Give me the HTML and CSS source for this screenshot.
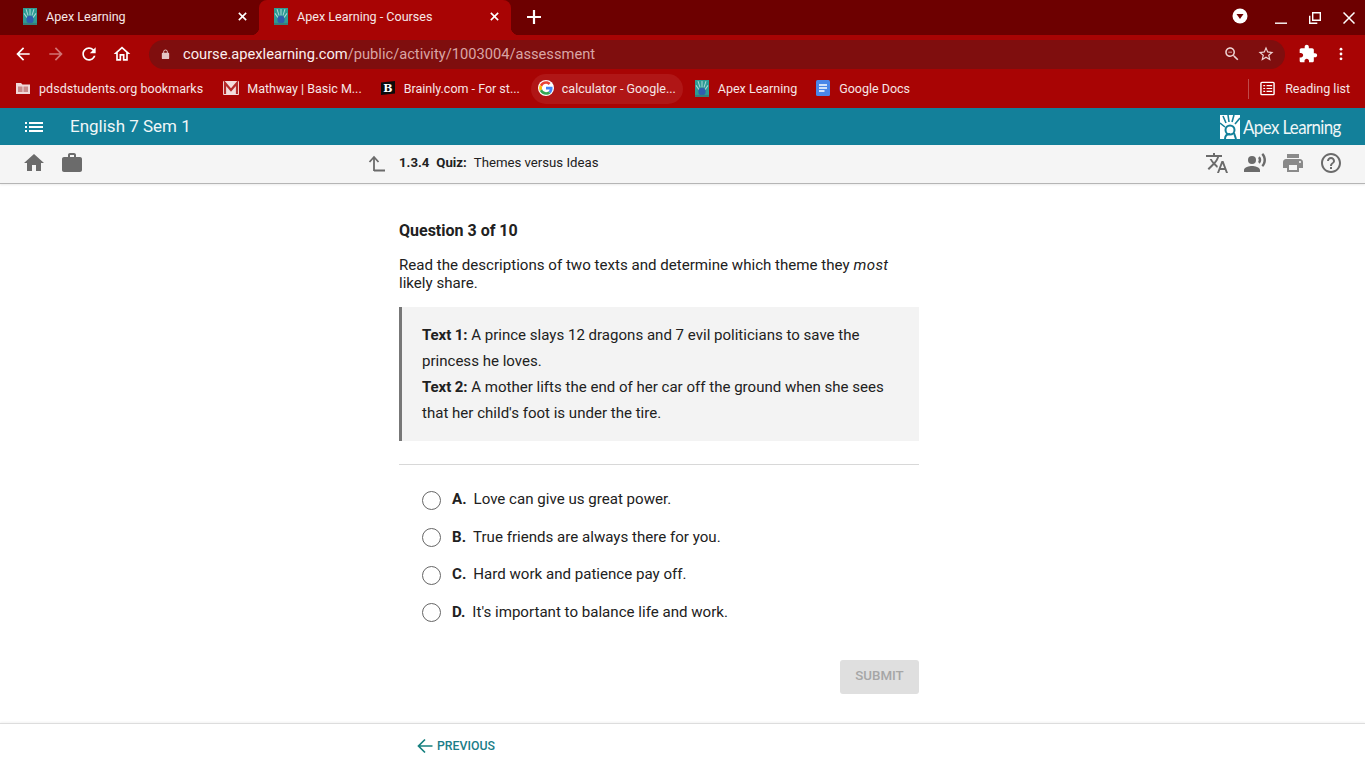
FILE: index.html
```html
<!DOCTYPE html>
<html lang="en">
<head>
<meta charset="utf-8">
<title>Apex Learning - Courses</title>
<link rel="stylesheet" href="styles.css">
</head>
<body>
<svg class="sprite" xmlns="http://www.w3.org/2000/svg">
  <symbol id="fav" viewBox="1 0 14 16" preserveAspectRatio="none"><rect x="1" y="0" width="14" height="16" fill="#2e9c94"/><path d="M4 1l2 6M8 1v6M12 1l-2 6M2 5l3 4M14 5l-3 4" stroke="#a9d6d8" stroke-width="1" fill="none"/><circle cx="8" cy="11" r="3.6" fill="#2f5fb0"/><rect x="1" y="14" width="14" height="2" fill="#35807c"/></symbol>
  <symbol id="close" viewBox="0 0 12 12"><path d="M2 2l8 8M10 2l-8 8" stroke="currentColor" stroke-width="1.7" fill="none"/></symbol>
  <symbol id="back" viewBox="0 0 24 24"><path d="M20 11H7.83l5.59-5.59L12 4l-8 8 8 8 1.41-1.41L7.83 13H20v-2z"/></symbol>
  <symbol id="fwd" viewBox="0 0 24 24"><path d="M4 11h12.17l-5.59-5.59L12 4l8 8-8 8-1.41-1.41L16.17 13H4v-2z"/></symbol>
  <symbol id="refresh" viewBox="0 0 24 24"><path d="M17.65 6.35C16.2 4.9 14.21 4 12 4c-4.42 0-7.99 3.58-7.99 8s3.57 8 7.99 8c3.73 0 6.84-2.55 7.73-6h-2.08c-.82 2.33-3.04 4-5.65 4-3.31 0-6-2.69-6-6s2.69-6 6-6c1.66 0 3.14.69 4.22 1.78L13 11h7V4l-2.35 2.35z"/></symbol>
  <symbol id="homeo" viewBox="0 0 24 24"><path d="M12 5.69l5 4.5V18h-2v-6H9v6H7v-7.81l5-4.5M12 3L2 12h3v8h6v-6h2v6h6v-8h3L12 3z"/></symbol>
  <symbol id="lock" viewBox="0 0 24 24"><path d="M18 8h-1V6c0-2.76-2.24-5-5-5S7 3.24 7 6v2H6c-1.1 0-2 .9-2 2v10c0 1.1.9 2 2 2h12c1.1 0 2-.9 2-2V10c0-1.1-.9-2-2-2zM9 6c0-1.66 1.34-3 3-3s3 1.34 3 3v2H9V6z"/></symbol>
  <symbol id="zoomout" viewBox="0 0 24 24"><path d="M15.5 14h-.79l-.28-.27C15.41 12.59 16 11.11 16 9.5 16 5.91 13.09 3 9.5 3S3 5.91 3 9.5 5.91 16 9.5 16c1.61 0 3.09-.59 4.23-1.57l.27.28v.79l5 4.99L20.49 19l-4.99-5zm-6 0C7.01 14 5 11.99 5 9.5S7.01 5 9.5 5 14 7.01 14 9.5 11.99 14 9.5 14zM7 9h5v1H7z"/></symbol>
  <symbol id="star" viewBox="0 0 24 24"><path d="M22 9.24l-7.19-.62L12 2 9.19 8.63 2 9.24l5.46 4.73L5.82 21 12 17.27 18.18 21l-1.63-7.03L22 9.24zM12 15.4l-3.76 2.27 1-4.28-3.32-2.88 4.38-.38L12 6.1l1.71 4.04 4.38.38-3.32 2.88 1 4.28L12 15.4z"/></symbol>
  <symbol id="ext" viewBox="0 0 24 24"><path d="M20.5 11H19V7c0-1.1-.9-2-2-2h-4V3.5C13 2.12 11.88 1 10.5 1S8 2.12 8 3.5V5H4c-1.1 0-1.99.9-1.99 2v3.8H3.5c1.49 0 2.7 1.21 2.7 2.7s-1.21 2.7-2.7 2.7H2V20c0 1.1.9 2 2 2h3.8v-1.5c0-1.49 1.21-2.7 2.7-2.7 1.49 0 2.7 1.21 2.7 2.7V22H17c1.1 0 2-.9 2-2v-4h1.5c1.38 0 2.5-1.12 2.5-2.5S21.88 11 20.5 11z"/></symbol>
  <symbol id="home" viewBox="0 0 24 24"><path d="M10 20v-6h4v6h5v-8h3L12 3 2 12h3v8z"/></symbol>
  <symbol id="work" viewBox="0 0 24 24"><path d="M20 6h-4V4c0-1.11-.89-2-2-2h-4c-1.11 0-2 .89-2 2v2H4c-1.11 0-1.99.89-1.99 2L2 19c0 1.11.89 2 2 2h16c1.11 0 2-.89 2-2V8c0-1.11-.89-2-2-2zm-6 0h-4V4h4v2z"/></symbol>
  <symbol id="translate" viewBox="0 0 24 24"><path d="M12.87 15.07l-2.54-2.51.03-.03c1.74-1.94 2.98-4.17 3.71-6.53H17V4h-7V2H8v2H1v1.99h11.17C11.5 7.92 10.44 9.75 9 11.35 8.07 10.32 7.3 9.19 6.69 8h-2c.73 1.63 1.73 3.17 2.98 4.56l-5.09 5.02L4 19l5-5 3.11 3.11.76-2.04zM18.5 10h-2L12 22h2l1.12-3h4.75L21 22h2l-4.5-12zm-2.62 7l1.62-4.33L19.12 17h-3.24z"/></symbol>
  <symbol id="voice" viewBox="0 0 24 24"><circle cx="9" cy="9" r="4"/><path d="M9 15c-2.67 0-8 1.34-8 4v2h16v-2c0-2.66-5.33-4-8-4zm7.76-9.64l-1.68 1.69c.84 1.18.84 2.71 0 3.89l1.68 1.69c2.02-2.02 2.02-5.07 0-7.27zM20.07 2l-1.63 1.63c2.77 3.02 2.77 7.56 0 10.74L20.07 16c3.9-3.89 3.91-9.95 0-14z"/></symbol>
  <symbol id="print" viewBox="0 0 24 24"><path d="M19 8H5c-1.66 0-3 1.34-3 3v6h4v4h12v-4h4v-6c0-1.66-1.34-3-3-3zm-3 11H8v-5h8v5zm3-7c-.55 0-1-.45-1-1s.45-1 1-1 1 .45 1 1-.45 1-1 1zm-1-9H6v4h12V3z"/></symbol>
  <symbol id="help" viewBox="0 0 24 24"><path d="M11 18h2v-2h-2v2zm1-16C6.48 2 2 6.48 2 12s4.48 10 10 10 10-4.48 10-10S17.52 2 12 2zm0 18c-4.41 0-8-3.59-8-8s3.59-8 8-8 8 3.59 8 8-3.59 8-8 8zm0-14c-2.21 0-4 1.79-4 4h2c0-1.1.9-2 2-2s2 .9 2 2c0 2-3 1.75-3 5h2c0-2.25 3-2.5 3-5 0-2.21-1.79-4-4-4z"/></symbol>
  <symbol id="list" viewBox="0 0 24 24"><path d="M3 13h2v-2H3v2zm0 4h2v-2H3v2zm0-8h2V7H3v2zm4 4h14v-2H7v2zm0 4h14v-2H7v2zM7 7v2h14V7H7z"/></symbol>
  <symbol id="upto" viewBox="0 0 18 18"><path d="M7 17V3.500M2.500 8L7 3l4.500 5M7 16.500h11" fill="none" stroke="currentColor" stroke-width="1.800"/></symbol>
</svg>

<header class="chrome">
  <div class="tabstrip">
    <div class="tab">
      <svg class="fav"><use href="#fav"/></svg>
      <span class="tab-title">Apex Learning</span>
      <svg class="tab-x"><use href="#close"/></svg>
    </div>
    <div class="tab tab-active">
      <svg class="fav"><use href="#fav"/></svg>
      <span class="tab-title">Apex Learning - Courses</span>
      <svg class="tab-x"><use href="#close"/></svg>
    </div>
    <svg class="newtab" viewBox="0 0 14 14"><path d="M7 0v14M0 7h14" stroke="#fff" stroke-width="2.200"/></svg>
    <div class="winbtns">
      <svg class="dropdown" viewBox="0 0 16 16"><circle cx="8" cy="8" r="7.500" fill="#fff"/><path d="M4.500 6h7L8 11z" fill="#6d0000"/></svg>
      <svg class="win win-min" viewBox="0 0 12 12"><path d="M0 11.200h12" stroke="#fff" stroke-width="1.400"/></svg>
      <svg class="win win-max" viewBox="0 0 12 12"><path d="M3.700.7h7.600v7.600H3.700zM.7 3.700v7.600h7.600" fill="none" stroke="#fff" stroke-width="1.400"/></svg>
      <svg class="win win-close" viewBox="0 0 12 12"><path d="M.5.500l11 11M11.500.5l-11 11" stroke="#fff" stroke-width="1.500"/></svg>
    </div>
  </div>

  <div class="toolbar">
    <svg class="ti"><use href="#back"/></svg>
    <svg class="ti ti-dim"><use href="#fwd"/></svg>
    <svg class="ti"><use href="#refresh"/></svg>
    <svg class="ti"><use href="#homeo"/></svg>
    <div class="omnibox">
      <svg class="lock"><use href="#lock"/></svg>
      <span class="url"><span class="url-host">course.apexlearning.com</span>/public/activity/1003004/assessment</span>
      <svg class="omni-i omni-zoom"><use href="#zoomout"/></svg>
      <svg class="omni-i omni-star"><use href="#star"/></svg>
    </div>
    <svg class="ti ti-ext"><use href="#ext"/></svg>
    <svg class="kebab" viewBox="0 0 4 16"><circle cx="2" cy="2.500" r="1.600"/><circle cx="2" cy="8" r="1.600"/><circle cx="2" cy="13.500" r="1.600"/></svg>
  </div>

  <nav class="bookmarks">
    <a class="bm">
      <svg class="bm-i" viewBox="0 0 16 16"><path d="M1 3h5l1.500 1.500H15V14H1z" fill="#f0d8d8"/><rect x="3" y="6.500" width="4.500" height="5.500" fill="#c98a8a"/><rect x="8.500" y="6.500" width="4.500" height="5.500" fill="#c98a8a"/></svg>
      <span>pdsdstudents.org bookmarks</span>
    </a>
    <a class="bm">
      <svg class="bm-i" viewBox="0 0 16 16"><rect x="0" y="1" width="16" height="14" rx="1" fill="#f3dcdc"/><path d="M2 14V3l6 7 6-7v11" fill="none" stroke="#b52a2a" stroke-width="2.200"/></svg>
      <span>Mathway | Basic M...</span>
    </a>
    <a class="bm">
      <svg class="bm-i" viewBox="0 0 16 16"><path d="M1 2.500L15 1v12.500L1 15z" fill="#0b0b0b"/><text x="8" y="11.800" class="bm-b">B</text></svg>
      <span>Brainly.com - For st...</span>
    </a>
    <a class="bm bm-hover">
      <svg class="bm-i" viewBox="-4 -4 56 56"><circle cx="24" cy="24" r="28" fill="#fff"/><path fill="#EA4335" d="M24 9.500c3.540 0 6.710 1.220 9.210 3.600l6.850-6.850C35.900 2.380 30.470 0 24 0 14.620 0 6.510 5.380 2.560 13.220l7.980 6.190C12.430 13.720 17.740 9.500 24 9.500z"/><path fill="#4285F4" d="M46.980 24.550c0-1.570-.15-3.090-.38-4.550H24v9.020h12.940c-.58 2.960-2.260 5.480-4.780 7.180l7.730 6c4.510-4.180 7.090-10.360 7.090-17.650z"/><path fill="#FBBC05" d="M10.530 28.590c-.48-1.450-.76-2.990-.76-4.590s.27-3.140.76-4.590l-7.980-6.190C.92 16.460 0 20.120 0 24c0 3.880.92 7.540 2.560 10.780l7.970-6.190z"/><path fill="#34A853" d="M24 48c6.480 0 11.930-2.130 15.890-5.810l-7.730-6c-2.150 1.450-4.920 2.300-8.160 2.300-6.260 0-11.570-4.220-13.470-9.910l-7.980 6.190C6.510 42.620 14.620 48 24 48z"/></svg>
      <span>calculator - Google...</span>
    </a>
    <a class="bm">
      <svg class="bm-i bm-fav"><use href="#fav"/></svg>
      <span>Apex Learning</span>
    </a>
    <a class="bm">
      <svg class="bm-i" viewBox="0 0 16 16"><rect x="1" y="0" width="14" height="16" rx="1.500" fill="#4a86e8"/><path d="M4 5h8M4 8h8M4 11h5.500" stroke="#fff" stroke-width="1.300"/></svg>
      <span>Google Docs</span>
    </a>
    <div class="reading">
      <svg class="reading-i" viewBox="0 0 16 16"><rect x="1" y="1.500" width="14" height="13" rx="1" fill="none" stroke="#fff" stroke-width="1.500"/><path d="M3.500 5h2M7 5h6M3.500 8h2M7 8h6M3.500 11h2M7 11h6" stroke="#fff" stroke-width="1.300"/></svg>
      <span>Reading list</span>
    </div>
  </nav>
</header>

<div class="appbar">
  <svg class="menu"><use href="#list"/></svg>
  <span class="course">English 7 Sem 1</span>
  <div class="logo">
    <svg class="logo-mark" viewBox="0 0 20 24"><rect width="20" height="24" fill="#fff"/><path d="M3 1l3 7M8 0l1 7M14 0l-2 7M20 3l-5 6M0 8l5 4" stroke="#13809a" stroke-width="1.600" fill="none"/><circle cx="10" cy="15" r="4.500" fill="none" stroke="#13809a" stroke-width="2"/><path d="M5 24c0-4 2-5 5-5M14 18l2 6" stroke="#13809a" stroke-width="2" fill="none"/></svg>
    <span class="logo-text">Apex Learning</span>
  </div>
</div>

<div class="subbar">
  <div class="sub-left">
    <svg class="si"><use href="#home"/></svg>
    <svg class="si"><use href="#work"/></svg>
  </div>
  <svg class="up"><use href="#upto"/></svg>
  <div class="crumb"><b>1.3.4</b><b>Quiz:</b><span>Themes versus Ideas</span></div>
  <div class="sub-right">
    <svg class="si"><use href="#translate"/></svg>
    <svg class="si"><use href="#voice"/></svg>
    <svg class="si si-print"><use href="#print"/></svg>
    <svg class="si"><use href="#help"/></svg>
  </div>
</div>

<main class="main">
  <div class="column">
    <h1 class="qnum">Question 3 of 10</h1>
    <p class="prompt">Read the descriptions of two texts and determine which theme they <em>most</em> likely share.</p>
    <blockquote class="passage">
      <p><b>Text 1:</b> A prince slays 12 dragons and 7 evil politicians to save the princess he loves.</p>
      <p><b>Text 2:</b> A mother lifts the end of her car off the ground when she sees that her child's foot is under the tire.</p>
    </blockquote>
    <ul class="answers">
      <li class="answer"><span class="radio"></span><b>A.</b><span>Love can give us great power.</span></li>
      <li class="answer"><span class="radio"></span><b>B.</b><span>True friends are always there for you.</span></li>
      <li class="answer"><span class="radio"></span><b>C.</b><span>Hard work and patience pay off.</span></li>
      <li class="answer"><span class="radio"></span><b>D.</b><span>It's important to balance life and work.</span></li>
    </ul>
    <div class="actions"><button class="submit" disabled>SUBMIT</button></div>
  </div>
</main>

<footer class="footer">
  <a class="prev">
    <svg class="prev-i" viewBox="0 0 16 16"><path d="M15.500 8H1.500M8 1.500L1.500 8 8 14.500" fill="none" stroke="#16807f" stroke-width="1.700"/></svg>
    <span>PREVIOUS</span>
  </a>
</footer>
</body>
</html>
```

FILE: styles.css
```css
* { box-sizing: border-box; }
html, body { margin: 0; height: 100%; }
body {
  height: 768px;
  overflow: hidden;
  display: flex;
  flex-direction: column;
  font-family: Roboto, "Liberation Sans", sans-serif;
  background: #fff;
  color: #212121;
}
.sprite { display: none; }

/* Browser chrome */
.chrome { color: #fff; }
.tabstrip {
  height: 35px;
  background: #6d0000;
  display: flex;
  align-items: center;
  padding-left: 8px;
}
.tab {
  position: relative;
  width: 251px;
  height: 35px;
  display: flex;
  align-items: center;
  padding: 0 10px 2px 15px;
  font-size: 12.550px;
}
.tab-active {
  width: 252px;
  background: #a80404;
  border-radius: 8px 8px 0 0;
}
.tab-active::before,
.tab-active::after {
  content: "";
  position: absolute;
  bottom: 0;
  width: 8px;
  height: 8px;
}
.tab-active::before { left: -8px; background: radial-gradient(circle at 0 0, transparent 8px, #a80404 8.500px); }
.tab-active::after { right: -8px; background: radial-gradient(circle at 100% 0, transparent 8px, #a80404 8.500px); }
.fav { width: 14px; height: 17px; flex: none; }
.tab-title { margin-left: 9px; flex: 1; color: #f6e6e6; white-space: nowrap; }
.tab-x { width: 11px; height: 11px; margin-right: 1px; color: #fff; }
.newtab { width: 14px; height: 14px; margin-left: 16px; margin-bottom: 2px; }
.winbtns { margin-left: auto; display: flex; align-items: center; }
.dropdown { width: 16px; height: 16px; margin-right: 27px; margin-bottom: 4px; }
.win { width: 12px; height: 12px; }
.win-min { margin-right: 22px; margin-top: 1px; }
.win-max { margin-right: 22px; }
.win-close { margin-right: 10px; }

.toolbar {
  height: 35px;
  background: #a80404;
  display: flex;
  align-items: center;
  padding: 3px 0 0 13px;
  fill: #fff;
}
.ti { width: 20px; height: 20px; margin-right: 13px; flex: none; }
.ti-dim { fill: #d27474; }
.omnibox {
  width: 1136px;
  height: 29px;
  margin-left: 4px;
  background: #7f0e0e;
  border-radius: 15px;
  display: flex;
  align-items: center;
  padding-left: 11px;
  flex: none;
}
.lock { width: 11px; height: 11px; fill: #e4c4c4; flex: none; }
.url { margin-left: 12px; font-size: 14.680px; color: #d9a5a5; flex: 1; white-space: nowrap; }
.url-host { color: #fbeeee; }
.omni-i { width: 18px; height: 18px; fill: #eed3d3; flex: none; }
.omni-zoom { margin-right: 16px; }
.omni-star { margin-right: 10px; }
.ti-ext { margin-left: 13px; margin-right: 0; }
.kebab { width: 4px; height: 14px; margin-left: 21px; fill: #fff; flex: none; }

.bookmarks {
  height: 38px;
  background: #a80404;
  display: flex;
  align-items: center;
  padding-left: 8px;
  font-size: 12.500px;
  color: #f6e6e6;
}
.bm {
  height: 30px;
  display: flex;
  align-items: center;
  padding: 0 7px 2px;
  margin-right: 4px;
  white-space: nowrap;
  border-radius: 15px;
}
.bm:first-child { margin-right: 6px; letter-spacing: .04px; }
.bm-i { width: 16px; height: 16px; margin-right: 8px; flex: none; }
.bm-fav { width: 14px; height: 17px; margin: 0 9px 0 1px; }
.bm-b { font-size: 11px; font-weight: 900; font-family: "DejaVu Serif", serif; fill: #fff; text-anchor: middle; }
.bm-hover { background: #b01616; }
.reading {
  margin-left: auto;
  display: flex;
  align-items: center;
  height: 20px;
  border-left: 1px solid #c04a4a;
  padding: 0 15px 2px 11px;
}
.reading-i { width: 15px; height: 15px; margin-right: 10px; }

/* App header */
.appbar {
  height: 37px;
  background: #13809a;
  display: flex;
  align-items: center;
  padding: 0 24px 0 22px;
  color: #fff;
}
.menu { width: 24px; height: 24px; fill: #fff; }
.course { margin: 0 0 2px 24px; font-size: 17px; color: #f0f7f8; }
.logo { margin-left: auto; display: flex; align-items: center; }
.logo-mark { width: 20px; height: 24px; }
.logo-text {
  margin-left: -9px;
  font-family: Lato, sans-serif;
  font-size: 19px;
  letter-spacing: -.7px;
  color: #eef6f7;
  transform: scaleX(.89);
  transform-origin: right center;
}

.subbar {
  height: 39px;
  background: #f5f5f5;
  border-bottom: 1px solid #b5b5b5;
  box-shadow: 0 1px 2px rgba(0,0,0,.08);
  display: flex;
  align-items: center;
  padding: 0 22px 3px 22px;
}
.si { width: 24px; height: 24px; fill: #6b6b6b; flex: none; }
.sub-left { display: flex; gap: 14px; width: 345px; }
.up { width: 18px; height: 18px; color: #6b6b6b; }
.crumb { margin-left: 14px; font-size: 13.200px; display: flex; gap: 7px; }
.sub-right { margin-left: auto; display: flex; gap: 14px; }
.si-print { fill: #8a8a8a; }

/* Quiz */
.main { flex: 1; padding-left: 399px; }
.column { width: 520px; }
.qnum { margin: 37px 0 0; font-size: 16px; line-height: 20px; font-weight: 700; color: #212121; }
.prompt { margin: 15px 0 0; font-size: 15.100px; line-height: 18px; }
.prompt em { letter-spacing: .4px; }
.passage {
  margin: 15px 0 0;
  padding: 15px 20px 15px 20px;
  background: #f3f3f3;
  border-left: 3px solid #777;
  font-size: 15.060px;
  line-height: 26px;
}
.passage p { margin: 0; }
.passage b { letter-spacing: -.1px; }
.answers {
  list-style: none;
  margin: 23px 0 0;
  padding: 24px 0 0 23px;
  border-top: 1px solid #d8d8d8;
}
.answer {
  height: 37.500px;
  display: flex;
  align-items: flex-start;
  font-size: 15.100px;
  line-height: 20px;
}
.answer b { margin-right: 7px; }
.radio {
  width: 19px;
  height: 19px;
  margin: 1.500px 11px 0 0;
  border: 1.300px solid #666;
  border-radius: 50%;
  background: #fff;
}
.actions { display: flex; justify-content: flex-end; margin-top: 21px; }
.submit {
  width: 79px;
  height: 34px;
  border: 0;
  border-radius: 3px;
  background: #dfdfdf;
  color: #a6a6a6;
  font: 500 13.300px Roboto, sans-serif;
  padding: 0 0 3px;
}

.footer {
  height: 45px;
  flex: none;
  border-top: 1px solid #ddd;
  box-shadow: 0 -1px 2px rgba(0,0,0,.05);
  padding: 0 0 1px 417px;
  display: flex;
  align-items: center;
}
.prev { display: flex; align-items: center; font-size: 12.300px; font-weight: 500; color: #1a7d88; }
.prev-i { width: 16px; height: 16px; margin-right: 4px; }
```
